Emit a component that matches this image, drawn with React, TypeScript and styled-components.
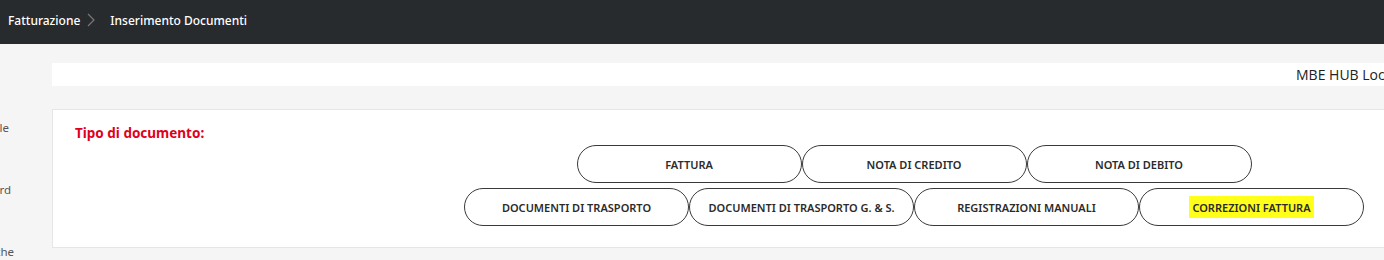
import styled, { createGlobalStyle } from 'styled-components'

const GlobalStyle = createGlobalStyle`
  html, body {
    margin: 0;
    padding: 0;
    background: #f5f5f5;
    overflow: hidden;
    font-family: "Noto Sans", "Open Sans", Arial, sans-serif;
  }
`

const Page = styled.div`
  display: flex;
  flex-direction: column;
  width: 1776px;
  height: 260px;
`

const TopBar = styled.div`
  display: flex;
  align-items: center;
  gap: 6px;
  height: 44px;
  padding: 0 8px 4px;
  box-sizing: border-box;
  background: #282b2e;
  color: #ffffff;
  font-size: 12px;
  font-weight: 500;
`

const Crumb = styled.span`
  white-space: nowrap;
`

const Chevron = styled.svg`
  width: 10px;
  height: 16px;
  margin-right: 8px;
`

const Body = styled.div`
  display: flex;
  flex: 1;
`

const Sidebar = styled.div`
  display: flex;
  flex-direction: column;
  width: 52px;
  overflow: hidden;
  padding-top: 76px;
  gap: 47px;
  color: #555;
  font-size: 11.5px;
`

const SideItem = styled.div<{ $end: number }>`
  display: flex;
  justify-content: flex-end;
  width: ${p => p.$end}px;
  white-space: nowrap;
  line-height: 15px;
`

const Main = styled.div`
  display: flex;
  flex-direction: column;
  flex: 1;
  padding-top: 19px;
  gap: 23px;
`

const InfoBar = styled.div`
  display: flex;
  justify-content: flex-end;
  align-items: center;
  height: 23px;
  padding-right: 324px;
  background: #ffffff;
  color: #222;
  font-family: "Open Sans", "Noto Sans", Arial, sans-serif;
  font-size: 14px;
`

const Card = styled.div`
  display: flex;
  flex-direction: column;
  background: #ffffff;
  border: 1px solid #e6e6e6;
  height: 139px;
  box-sizing: border-box;
  padding: 13px 22px 0;
`

const Label = styled.div`
  color: #e0001b;
  font-size: 13.5px;
  font-weight: 700;
  line-height: 20px;
`

const ButtonRows = styled.div`
  display: flex;
  flex-direction: column;
  align-items: center;
  gap: 5px;
  margin-top: 2px;
`

const ButtonRow = styled.div`
  display: flex;
`

const DocButton = styled.button`
  width: 225px;
  height: 38px;
  border: 1px solid #3a3a3a;
  border-radius: 19px;
  background: #ffffff;
  color: #2b2b2b;
  font-family: "Noto Sans", "Open Sans", Arial, sans-serif;
  font-size: 11px;
  font-weight: 600;
  cursor: pointer;
`

const Marker = styled.span`
  background: #ffff1a;
  padding: 4px 3px 3px;
`

const rowOne = ['FATTURA', 'NOTA DI CREDITO', 'NOTA DI DEBITO']
const rowTwo = ['DOCUMENTI DI TRASPORTO', 'DOCUMENTI DI TRASPORTO G. & S.', 'REGISTRAZIONI MANUALI']

function App() {
  return (
    <>
      <GlobalStyle />
      <Page>
        <TopBar>
          <Crumb>Fatturazione</Crumb>
          <Chevron viewBox="0 0 10 16">
            <path d="M2 2 L8 8 L2 14" fill="none" stroke="#777" strokeWidth="1.2" />
          </Chevron>
          <Crumb>Inserimento Documenti</Crumb>
        </TopBar>
        <Body>
          <Sidebar>
            <SideItem $end={9}>Contabile</SideItem>
            <SideItem $end={11}>Dashboard</SideItem>
            <SideItem $end={14}>Statistiche</SideItem>
          </Sidebar>
          <Main>
            <InfoBar>MBE HUB Locale Milano</InfoBar>
            <Card>
              <Label>Tipo di documento:</Label>
              <ButtonRows>
                <ButtonRow>
                  {rowOne.map(t => <DocButton key={t}>{t}</DocButton>)}
                </ButtonRow>
                <ButtonRow>
                  {rowTwo.map(t => <DocButton key={t}>{t}</DocButton>)}
                  <DocButton><Marker>CORREZIONI FATTURA</Marker></DocButton>
                </ButtonRow>
              </ButtonRows>
            </Card>
          </Main>
        </Body>
      </Page>
    </>
  )
}

export default App
